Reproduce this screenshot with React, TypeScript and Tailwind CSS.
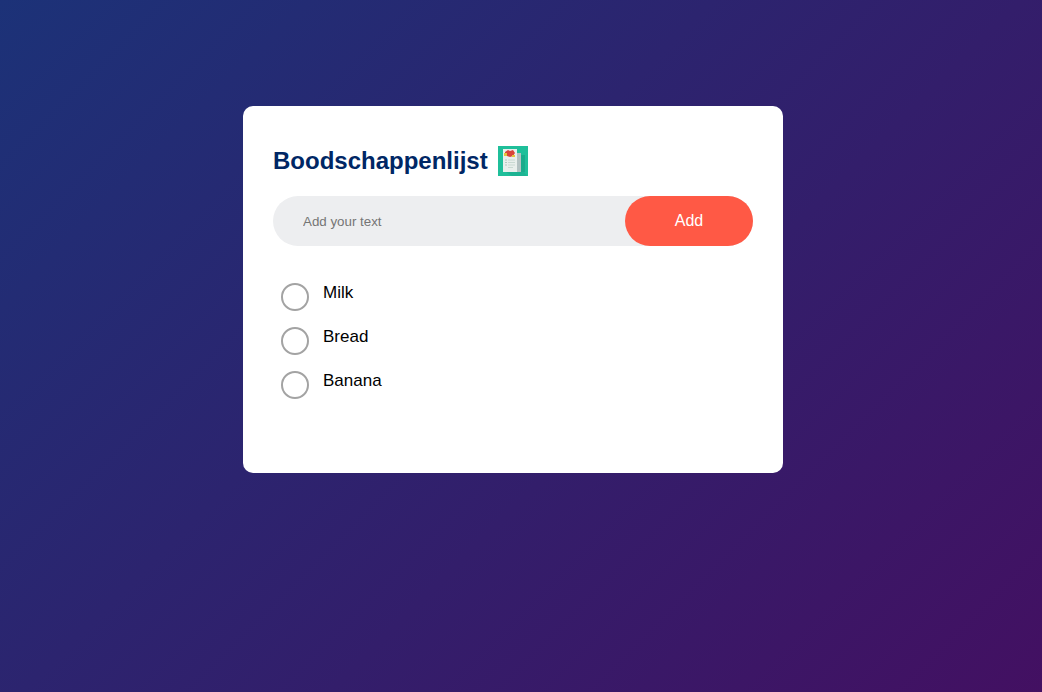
const items = ['Milk', 'Bread', 'Banana'];

function ListIcon() {
  return (
    <svg width="30" height="30" viewBox="0 0 30 30" className="ml-[10px] shrink-0">
      <rect width="30" height="30" fill="#1fbf9a" />
      <path d="M8 26h18l3 4H14z" fill="#1cb392" />
      <rect x="23" y="9" width="4" height="17" fill="#1aab8b" />
      <rect x="19" y="7" width="4" height="19" fill="#b4c2c2" />
      <rect x="5" y="3" width="14" height="23" fill="#e9efec" />
      <path d="M7 6l3-2 2 1 3-1 2 3-2 3-3 1-3-1-2 0z" fill="#d8453a" />
      <rect x="6" y="7" width="3" height="3" fill="#e4c63a" />
      <rect x="14" y="9" width="3" height="2" fill="#e4c63a" />
      <path d="M10 14h7M10 16.500h7M10 19h7M10 21.500h5" stroke="#c9d9d2" strokeWidth="1" />
      <path d="M7 14h2M7 16.500h2M7 19h2" stroke="#b4c8bf" strokeWidth="1" />
    </svg>
  );
}

export default function App() {
  return (
    <div className="min-h-screen w-full bg-[linear-gradient(135deg,#1c3278,#431062)] pt-2.5 pr-[26px] pb-2.5 pl-2.5 font-['Liberation_Sans',Arial,sans-serif]">
      <div className="mx-auto mt-[96px] w-full max-w-[540px] rounded-[10px] bg-white px-[30px] pt-10 pb-[69px]">
        <h2 className="mb-5 flex items-center text-[24px] leading-[30px] font-bold text-[#002765]">
          Boodschappenlijst
          <ListIcon />
        </h2>
        <div className="mb-[26px] flex items-center rounded-[30px] bg-[#edeef0]">
          <input
            type="text"
            placeholder="Add your text"
            className="h-[50px] min-w-0 flex-1 bg-transparent px-[30px] text-[13.333px] outline-none placeholder:text-[#757575]"
          />
          <button className="h-[50px] w-32 shrink-0 rounded-[40px] bg-[#ff5945] text-base text-white">Add</button>
        </div>
        <ul>
          {items.map((item) => (
            <li key={item} className="flex h-11 items-start pl-2 text-[17px] leading-5 text-black">
              <span className="mt-[11px] mr-[14px] size-7 shrink-0 rounded-full border-2 border-[#a3a3a3]" />
              <span className="mt-[11px]">{item}</span>
            </li>
          ))}
        </ul>
      </div>
    </div>
  );
}
